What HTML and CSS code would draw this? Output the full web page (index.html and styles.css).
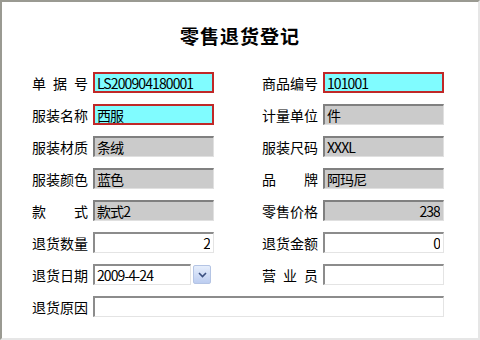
FILE: index.html
```html
<!DOCTYPE html>
<html lang="zh-CN">
  <head>
    <meta charset="UTF-8" />
    <title>零售退货登记</title>
    <link rel="stylesheet" href="styles.css">
  </head>
  <body>
    <div class="frame">
      <h1 class="title">零售退货登记</h1>
      <div class="form">
        <div class="field">
          <span class="label">单 据 号</span>
          <input class="box key" type="text" value="LS200904180001" />
        </div>
        <div class="field">
          <span class="label">商品编号</span>
          <input class="box key" type="text" value="101001" />
        </div>
        <div class="field">
          <span class="label">服装名称</span>
          <input class="box key" type="text" value="西服" />
        </div>
        <div class="field">
          <span class="label">计量单位</span>
          <input class="box ro" type="text" value="件" readonly />
        </div>
        <div class="field">
          <span class="label">服装材质</span>
          <input class="box ro" type="text" value="条绒" readonly />
        </div>
        <div class="field">
          <span class="label">服装尺码</span>
          <input class="box ro" type="text" value="XXXL" readonly />
        </div>
        <div class="field">
          <span class="label">服装颜色</span>
          <input class="box ro" type="text" value="蓝色" readonly />
        </div>
        <div class="field">
          <span class="label">品 牌</span>
          <input class="box ro" type="text" value="阿玛尼" readonly />
        </div>
        <div class="field">
          <span class="label">款 式</span>
          <input class="box ro" type="text" value="款式2" readonly />
        </div>
        <div class="field">
          <span class="label">零售价格</span>
          <input class="box ro num" type="text" value="238" readonly />
        </div>
        <div class="field">
          <span class="label">退货数量</span>
          <input class="box num" type="text" value="2" />
        </div>
        <div class="field">
          <span class="label">退货金额</span>
          <input class="box num" type="text" value="0" />
        </div>
        <div class="field">
          <span class="label">退货日期</span>
          <input class="box date" type="text" value="2009-4-24" />
          <button class="drop" type="button">
            <svg width="9" height="6" viewBox="0 0 9 6"><path d="M1 1 L4.5 4.5 L8 1" fill="none" stroke="#3b5080" stroke-width="1.6"/></svg>
          </button>
        </div>
        <div class="field">
          <span class="label">营 业 员</span>
          <input class="box" type="text" value="" />
        </div>
        <div class="field wide">
          <span class="label">退货原因</span>
          <input class="box" type="text" value="" />
        </div>
      </div>
    </div>
  </body>
</html>
```

FILE: styles.css
```css
body {
  margin: 0;
  background: #ffffff;
  font-family: "Noto Sans CJK SC", sans-serif;
}
.frame {
  width: 480px;
  height: 340px;
  box-sizing: border-box;
  border-top: 2px solid #9a9a92;
  border-left: 2px solid #9a9a92;
  border-right: 2px solid #e6e6e6;
  border-bottom: 2px solid #e6e6e6;
  padding: 22px 0 0 30px;
}
.title {
  margin: 0;
  height: 24px;
  line-height: 24px;
  font-size: 19px;
  font-weight: bold;
  letter-spacing: 1px;
  text-align: center;
  padding-right: 30px;
  color: #000;
}
.form {
  margin-top: 24px;
  display: grid;
  grid-template-columns: 182px 182px;
  column-gap: 48px;
  row-gap: 11px;
}
.field {
  display: flex;
  align-items: center;
  height: 21px;
}
.wide {
  grid-column: 1 / 3;
}
.label {
  width: 56px;
  margin-right: 5px;
  font-size: 14px;
  color: #000;
  text-align: justify;
  text-align-last: justify;
  white-space: nowrap;
}
.box {
  box-sizing: border-box;
  width: 121px;
  height: 21px;
  margin: 0;
  padding: 0 2px;
  font-family: "Noto Sans CJK SC", sans-serif;
  font-size: 14px;
  letter-spacing: -0.9px;
  color: #000;
  background: #ffffff;
  border-style: solid;
  border-width: 2px 1px 1px 2px;
  border-color: #8c8c8c #e4e4e4 #e4e4e4 #8c8c8c;
  outline: none;
}
.wide .box {
  flex: 1;
}
.key {
  background: #80fcff;
  border-width: 2px;
  border-color: #c02828;
}
.ro {
  background: #cbcbcb;
  border-color: #808080 #e0e0e0 #e0e0e0 #808080;
}
.num {
  text-align: right;
  padding-right: 3px;
}
.date {
  width: 98px;
}
.drop {
  box-sizing: border-box;
  width: 18px;
  height: 19px;
  margin-left: 2px;
  padding: 0;
  border: 1px solid #b4c4e4;
  border-radius: 2px;
  background: linear-gradient(#e6eefc, #bccdf0);
  display: flex;
  align-items: center;
  justify-content: center;
}
```
